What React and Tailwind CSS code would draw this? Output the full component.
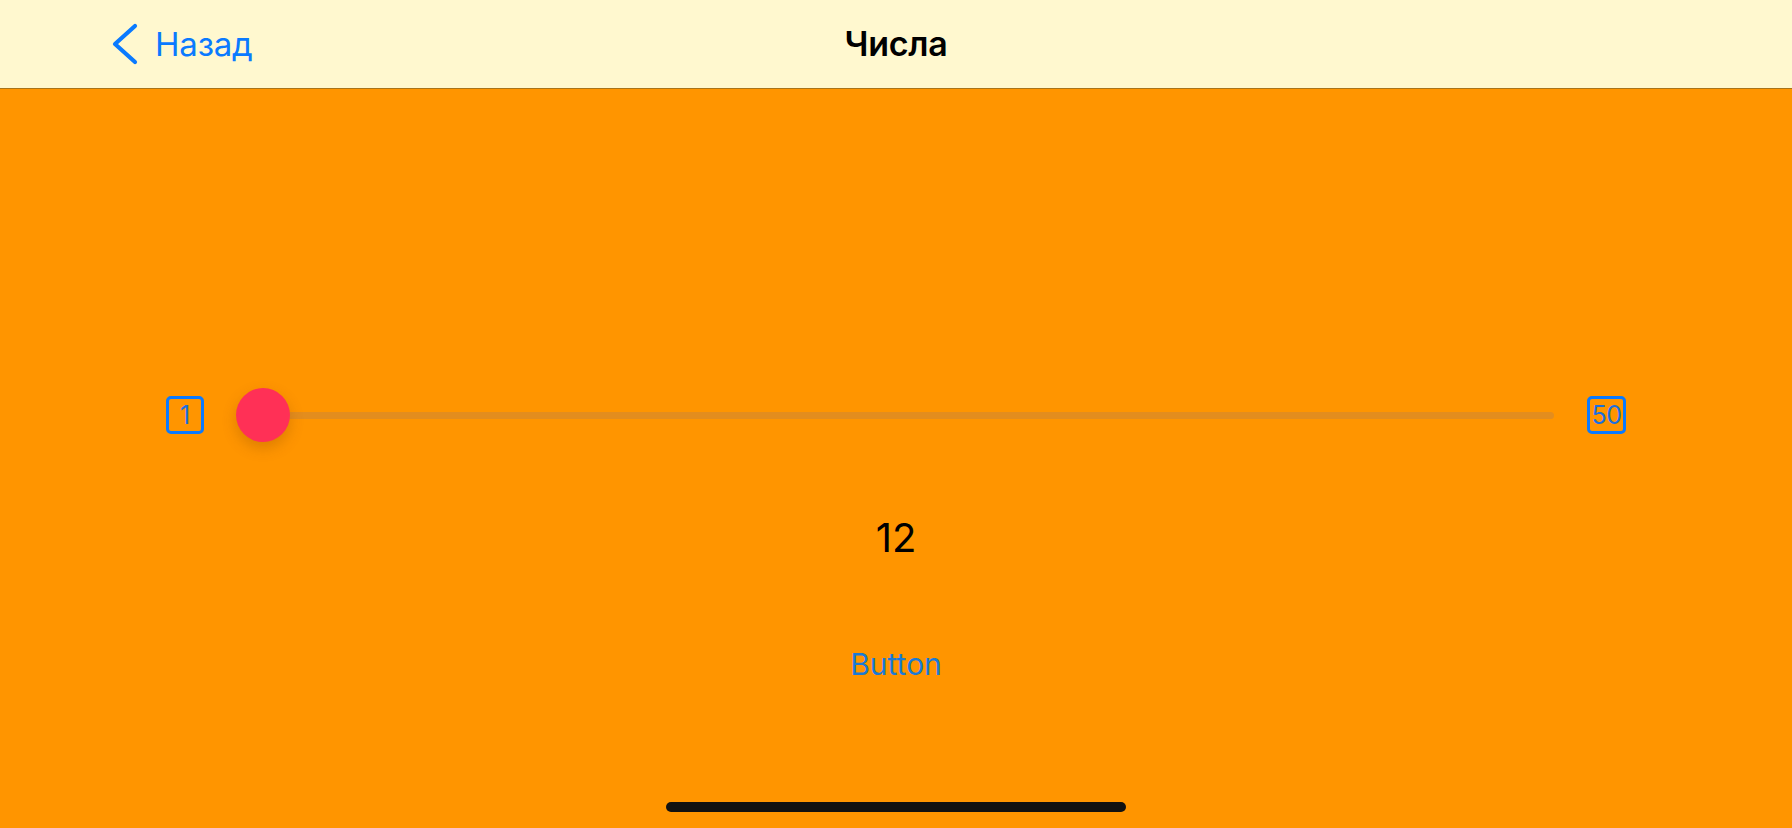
export default function App() {
  return (
    <div
      className="w-[1792px] h-[828px] flex flex-col bg-[#ff9500] overflow-hidden"
      style={{ fontFamily: 'Inter, "Noto Sans", sans-serif' }}
    >
      <header className="h-[89px] shrink-0 bg-[#fff8cf] border-b border-[#a8741a] relative flex items-center">
        <div className="flex items-center pl-[111px] gap-[17px] text-[#0a7aff]">
          <svg width="27" height="42" viewBox="0 0 27 42" fill="none">
            <polyline points="24,3 4,21 24,39" stroke="#0a7aff" strokeWidth="4.2" strokeLinecap="round" strokeLinejoin="round" />
          </svg>
          <span className="text-[33px] leading-none tracking-[-0.2px]">Назад</span>
        </div>
        <div className="absolute inset-0 flex items-center justify-center pointer-events-none">
          <span className="text-[34px] font-semibold text-black leading-none tracking-[-0.3px]">Числа</span>
        </div>
      </header>
      <main className="flex-1 flex flex-col items-center">
        <div className="w-full mt-[299px] px-[166px] flex items-center">
          <div className="w-[38px] h-[38px] border-[3px] border-[#0a7aff] rounded-[5px] flex items-center justify-center text-[25px] text-[#1a6fe0] leading-none">
            1
          </div>
          <div className="flex-1 relative h-[54px] ml-[32px] mr-[33px] flex items-center">
            <div className="absolute left-[27px] right-0 h-[7px] rounded-full bg-[#e38d1e]" />
            <div className="relative w-[54px] h-[54px] rounded-full bg-[#ff3056] shadow-[0_6px_14px_rgba(120,60,0,0.25)]" />
          </div>
          <div className="w-[39px] h-[38px] border-[3px] border-[#0a7aff] rounded-[5px] flex items-center justify-center text-[25px] text-[#1a6fe0] leading-none tracking-[-0.5px]">
            50
          </div>
        </div>
        <div className="mt-[72px] text-[40px] leading-[48px] text-black">12</div>
        <div className="mt-[84px] text-[30px] leading-[36px] text-[#1a7ad6]">Button</div>
        <div className="mt-auto mb-[16px] w-[460px] h-[10px] rounded-full bg-[#111111]" />
      </main>
    </div>
  );
}
